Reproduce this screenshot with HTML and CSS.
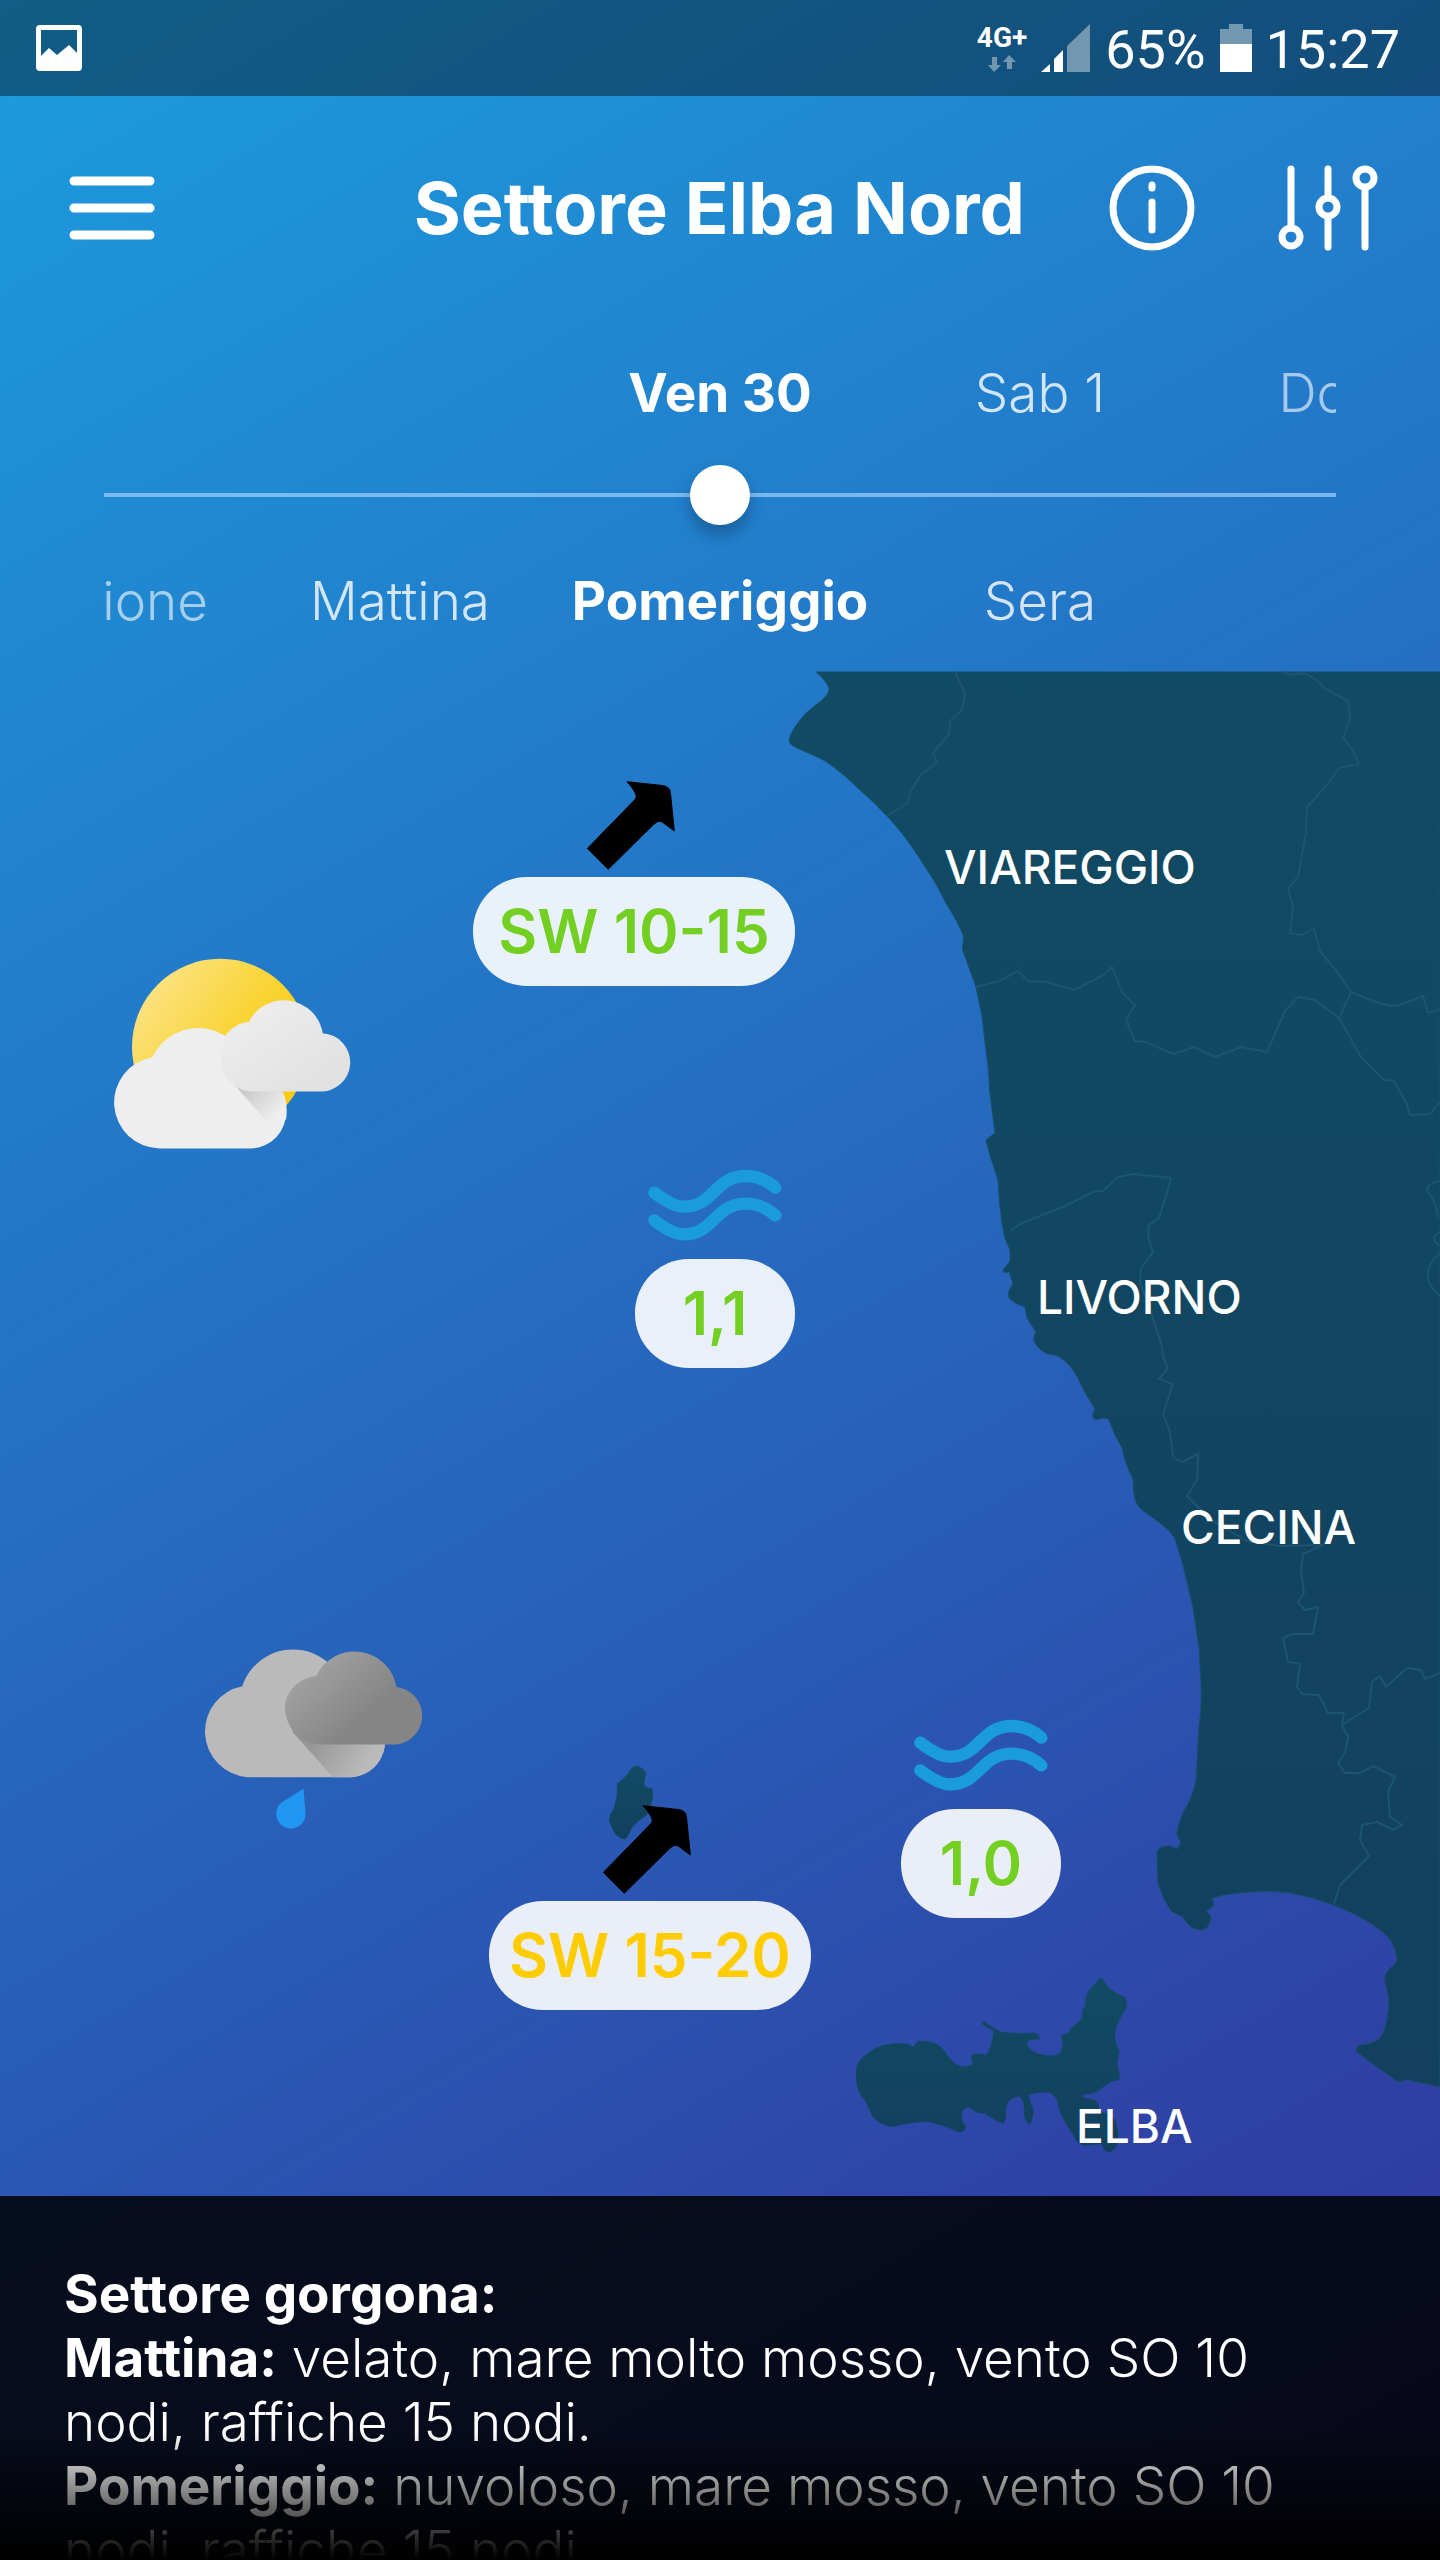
FILE: index.html
```html
<!DOCTYPE html>
<html lang="it">
<head>
    <meta charset="utf-8">
    <title>Settore Elba Nord</title>
    <link rel="stylesheet" href="styles.css">
</head>
<body>
<!-- barra di stato -->
<div class="status-bar">
    <svg class="status-picture" viewBox="0 0 48 48"><path fill="#fff" fill-rule="evenodd" d="M5 1h38a4 4 0 0 1 4 4v38a4 4 0 0 1-4 4H5a4 4 0 0 1-4-4V5a4 4 0 0 1 4-4zM6 6v26l8-8 8 7 12-10 8 8V6z"/></svg>
    <div class="status-right">
        <div class="network">
            <span>4G+</span>
            <svg viewBox="0 0 28 18"><path fill="#7497b0" d="M4 3h5v8h4l-7 7-6-7h4zM19 15h5V8h4l-7-7-6 7h4z"/></svg>
        </div>
        <svg class="signal" viewBox="0 0 50 48"><path fill="#fff" d="M0 48l9-8v8zM13 48V35l9-9v22z"/><path fill="#7497b0" d="M26 48V22L49 0v48z"/></svg>
        <span class="status-text">65%</span>
        <svg class="battery" viewBox="0 0 32 48"><path fill="#7497b0" d="M9 0h14v5h9v15H0V5h9z"/><path fill="#fff" d="M0 20h32v28H0z"/></svg>
        <span class="status-text">15:27</span>
    </div>
</div>

<header class="header">
    <button class="icon-button" type="button" aria-label="Menu">
        <svg class="icon-menu" viewBox="0 0 86 64"><path d="M5 5h76M5 32h76M5 59h76"/></svg>
    </button>
    <h1>Settore Elba Nord</h1>
    <button class="icon-button" type="button" aria-label="Info">
        <svg class="icon-info" viewBox="0 0 86 86"><circle cx="43" cy="43" r="39"/><path d="M43 37v28M43 20v3"/></svg>
    </button>
    <button class="icon-button" type="button" aria-label="Filtri">
        <svg class="icon-filter" viewBox="0 0 98 86"><path d="M12 4v59M49 4v29M49 52v30M86 23v59"/><circle cx="12" cy="72" r="9"/><circle cx="49" cy="42" r="9"/><circle cx="86" cy="13" r="9"/></svg>
    </button>
</header>

<!-- giorno e fascia oraria -->
<nav class="timeline">
    <div class="steps">
        <button class="step current first-day" type="button">Ven 30</button>
        <button class="step" type="button">Sab 1</button>
        <button class="step far" type="button">Dom 2</button>
    </div>
    <input class="slider" type="range" min="0" max="100" value="50" aria-label="Momento della previsione">
    <div class="steps">
        <button class="step far" type="button">Previsione</button>
        <button class="step" type="button">Mattina</button>
        <button class="step current" type="button">Pomeriggio</button>
        <button class="step" type="button">Sera</button>
    </div>
</nav>

<main class="map">
    <svg class="map-land" viewBox="0 672 1440 1524">
        <defs>
            <linearGradient id="land" x1="0" y1="0" x2="0" y2="1">
                <stop offset="0" stop-color="#114b63"/>
                <stop offset="1" stop-color="#12405e"/>
            </linearGradient>
        </defs>
        <!-- costa -->
        <path class="land" d="M816 672Q826 680 829 688Q830 693 821 701Q806 712 801 719Q791 731 789 740Q789 744 795 747C805 752 817 756 827 762Q844 774 860 790Q874 802 887 816Q905 835 920 859Q935 880 946 903Q959 924 963 935C965 942 961 945 963 951L976 987Q983 1015 985 1042Q989 1068 990 1094L995 1133L986 1140Q988 1150 998 1180Q999 1203 1002 1224Q1004 1239 1010 1250V1261L1003 1270Q1005 1275 1009 1271L1013 1284Q1007 1291 1009 1298C1014 1303 1022 1306 1025 1307L1027 1318L1036 1332Q1032 1338 1035 1343Q1040 1351 1048 1354C1056 1354 1063 1358 1070 1366Q1078 1376 1083 1389L1095 1409Q1090 1418 1096 1420Q1106 1416 1109 1420Q1114 1435 1122 1448Q1124 1461 1133 1479Q1133 1497 1137 1504C1141 1511 1149 1514 1157 1521Q1170 1530 1175 1539Q1183 1562 1188 1586Q1194 1608 1196 1629Q1200 1648 1200 1668Q1203 1698 1199 1727L1196 1780Q1193 1796 1183 1813Q1176 1830 1177 1835Q1179 1840 1181 1842L1177 1849Q1171 1845 1165 1846Q1157 1848 1157 1853Q1157 1870 1158 1883Q1163 1900 1172 1912L1183 1917Q1188 1926 1193 1928Q1201 1932 1207 1928L1211 1920Q1211 1913 1206 1912L1214 1905L1212 1898Q1226 1894 1240 1893Q1270 1890 1290 1893Q1313 1897 1333 1905Q1357 1914 1373 1925Q1387 1934 1392 1943Q1397 1953 1397 1960Q1394 1966 1390 1968Q1381 1977 1387 1990Q1390 1998 1388 2012Q1386 2030 1380 2038Q1374 2044 1360 2045Q1353 2049 1358 2053L1370 2062L1398 2082L1408 2080L1440 2087V672Z"/>
        <!-- confini delle province -->
        <g class="borders">
            <path d="M955 672L965 693 962 710 950 721 949 734 933 753 937 762 921 775 910 792 908 803 887 816"/>
            <path d="M1283 672L1291 675 1304 673 1317 680 1324 688 1348 701 1350 719 1343 738 1353 751 1359 764 1339 768 1326 786 1307 807 1306 833 1298 877 1288 888 1293 907 1290 933 1302 935 1314 928 1320 951 1341 977 1351 992 1339 1018"/>
            <path d="M976 987L999 981 1018 971 1028 981 1046 982 1074 990 1092 981 1105 974 1112 967 1122 992 1135 1005 1126 1020 1135 1041 1146 1042 1173 1054 1194 1047 1215 1057 1241 1047 1267 1052 1285 1011 1298 997 1315 1000 1339 1018 1361 1057 1384 1080 1394 1081 1406 1102 1410 1115 1430 1114 1440 1102"/>
            <path d="M1351 992Q1385 1007 1397 1006L1423 996 1428 1013 1440 1009"/>
            <path d="M1010 1231L1022 1223 1063 1207 1093 1192 1103 1191 1118 1177 1133 1174 1171 1178 1166 1196 1159 1218 1149 1225 1148 1237 1153 1252 1141 1268 1140 1282 1152 1316 1162 1346 1163 1357 1168 1368 1159 1379 1173 1384 1163 1414 1170 1432 1173 1457 1182 1462 1198 1454 1197 1480 1187 1496 1198 1507 1213 1521 1247 1541 1280 1546 1323 1545 1303 1554 1301 1571 1304 1593 1298 1602 1305 1610 1318 1607 1313 1634 1293 1634 1283 1638 1288 1662 1300 1664 1297 1687 1302 1694 1319 1695 1328 1713 1344 1713 1342 1725 1348 1737 1345 1753 1338 1763 1345 1773 1360 1773 1373 1766 1395 1777 1388 1792 1390 1817 1402 1825 1393 1830 1377 1822 1362 1825 1360 1840 1369 1856 1358 1867 1340 1885 1334 1904"/>
            <path d="M1342 1725L1369 1708 1372 1682 1380 1676 1386 1687 1407 1668 1421 1670 1425 1679 1440 1673"/>
            <path d="M1440 1181Q1422 1185 1429 1194Q1436 1200 1438 1218M1440 1232Q1428 1238 1440 1246M1440 1253Q1415 1275 1440 1296"/>
        </g>
        <!-- Capraia -->
        <path class="land" transform="translate(460 1740) scale(.3333)" d="M530 77Q548 82 558 98L552 132Q558 146 577 145Q582 170 574 190Q572 215 560 225Q530 245 515 265Q505 290 495 298Q480 298 466 282Q452 262 447 240Q450 220 460 208Q472 180 472 130Q498 113 512 88Q520 78 530 77Z"/>
        <!-- Elba -->
        <path class="land" transform="translate(820 1700) scale(.3333)" d="M108 1130Q106 1100 118 1082Q150 1048 190 1035Q230 1026 265 1032L280 1041L292 1024Q320 1020 345 1030Q370 1042 385 1070Q405 1098 430 1100Q455 1100 458 1090Q448 1068 462 1062Q480 1060 498 1065Q518 1040 520 992L488 974Q484 962 492 964Q525 990 550 997Q600 1002 645 998Q662 1005 658 1020Q640 1015 622 1025Q618 1045 650 1060Q700 1075 720 1058Q735 1035 722 1005L745 1000L755 982Q768 975 785 955L788 930L797 915Q792 890 810 868Q830 845 843 831L865 862Q885 880 915 892Q925 910 916 930Q880 985 886 1020L898 1055L892 1090L901 1135Q895 1145 880 1143Q855 1155 840 1170Q825 1182 788 1184Q785 1192 800 1195Q830 1195 835 1215L840 1235Q885 1240 890 1275Q900 1310 890 1340Q875 1365 853 1352L845 1332Q810 1335 790 1337Q768 1330 763 1310Q715 1240 713 1205Q705 1185 690 1178Q650 1175 625 1186L640 1230Q640 1265 628 1272Q612 1262 612 1240Q615 1200 598 1190Q565 1190 558 1225Q560 1260 550 1271Q520 1262 495 1240L475 1240L445 1222Q425 1225 424 1250Q428 1270 438 1278Q435 1302 410 1295Q370 1275 320 1265Q250 1270 220 1281Q175 1275 155 1245Q140 1205 122 1185Q108 1160 108 1130Z"/>
        <g class="places">
            <text x="944" y="884">VIAREGGIO</text>
            <text x="1037" y="1314">LIVORNO</text>
            <text x="1181" y="1544">CECINA</text>
            <text x="1076" y="2143">ELBA</text>
        </g>
    </svg>

    <svg class="weather sun-cloud" viewBox="95 112 715 580" role="img" aria-label="Velato">
        <defs>
            <linearGradient id="sun" x1="0" y1="0.2" x2="0.8" y2="0.8"><stop offset="0" stop-color="#fde389"/><stop offset=".6" stop-color="#f9d433"/><stop offset="1" stop-color="#fbcb12"/></linearGradient>
            <linearGradient id="white-cloud" x1="0" y1="0" x2="1" y2="1"><stop offset=".1" stop-color="#eee"/><stop offset=".8" stop-color="#e2e2e2"/></linearGradient>
            <linearGradient id="light-shade" gradientUnits="userSpaceOnUse" x1="490" y1="500" x2="585" y2="590"><stop offset="0" stop-color="#c6c6c6"/><stop offset="1" stop-color="#eee"/></linearGradient>
        </defs>
        <circle cx="420" cy="382" r="265" fill="url(#sun)"/>
        <path fill="#eee" d="M237 687A138 138 0 0 1 216 413A153 153 0 0 1 507 471A108 108 0 0 1 513 687Z"/>
        <path fill="url(#light-shade)" d="M440 470L555 600H618Q625 550 605 510Z"/>
        <path fill="url(#white-cloud)" d="M510 516Q465 512 436 470Q405 410 440 342Q470 308 506 307A118 118 0 0 1 728 341A87 87 0 0 1 718 516Z"/>
    </svg>

    <svg class="weather rain-cloud" viewBox="58 92 676 536" role="img" aria-label="Pioggia debole">
        <defs>
            <linearGradient id="gray-cloud" x1="0" y1="0.2" x2="0.7" y2="0.7"><stop offset="0" stop-color="#a6a6a6"/><stop offset=".9" stop-color="#858585"/></linearGradient>
            <linearGradient id="dark-shade" gradientUnits="userSpaceOnUse" x1="390" y1="370" x2="540" y2="460"><stop offset="0" stop-color="#969696"/><stop offset="1" stop-color="#bababa"/></linearGradient>
        </defs>
        <path fill="#bababa" d="M199 471A138 138 0 0 1 185 198A160 160 0 0 1 497 255A108 108 0 0 1 515 471Z"/>
        <path fill="url(#dark-shade)" d="M335 335L458 471H515Q600 460 614 372Z"/>
        <path fill="url(#gray-cloud)" d="M415 373Q370 372 338 335Q290 260 335 205Q365 170 408 166A127 127 0 0 1 648 200A87 87 0 0 1 648 373Z"/>
        <path fill="#2196f3" d="M369 506L375 578A44 44 0 1 1 305 546Z"/>
    </svg>

    <div class="pin wind wind-north">
        <svg class="arrow" viewBox="428 194 266 268"><path d="M429 398L575 248Q584 235 549 196L660 208Q678 212 680 228L692 345L654 317Q642 312 630 325L492 461Z"/></svg>
        <span class="pill calm">SW 10-15</span>
    </div>
    <div class="pin sea sea-north">
        <svg class="waves" viewBox="281 56 402 215"><path d="M300 127C340 158 365 169 388 169C480 169 480 77 575 77C610 77 640 92 663 112M300 210C340 241 365 252 388 252C480 252 480 160 575 160C610 160 640 175 663 195"/></svg>
        <span class="pill calm">1,1</span>
    </div>
    <div class="pin wind wind-south">
        <svg class="arrow" viewBox="428 194 266 268"><path d="M429 398L575 248Q584 235 549 196L660 208Q678 212 680 228L692 345L654 317Q642 312 630 325L492 461Z"/></svg>
        <span class="pill fresh">SW 15-20</span>
    </div>
    <div class="pin sea sea-south">
        <svg class="waves" viewBox="281 56 402 215"><path d="M300 127C340 158 365 169 388 169C480 169 480 77 575 77C610 77 640 92 663 112M300 210C340 241 365 252 388 252C480 252 480 160 575 160C610 160 640 175 663 195"/></svg>
        <span class="pill calm">1,0</span>
    </div>
</main>

<section class="forecast">
    <h2>Settore gorgona:</h2>
    <p><b>Mattina:</b> velato, mare molto mosso, vento SO 10 nodi, raffiche 15 nodi.</p>
    <p><b>Pomeriggio:</b> nuvoloso, mare mosso, vento SO 10 nodi, raffiche 15 nodi.</p>
</section>
</body>
</html>
```
FILE: styles.css
```css
* {
    box-sizing: border-box;
}
body {
    margin: 0;
    height: 100vh;
    display: flex;
    flex-direction: column;
    overflow: hidden;
    color: #fff;
    font-family: Inter, "Liberation Sans", sans-serif;
    background: linear-gradient(150deg, #1c9cde 0%, #2669bf 50%, #2f3fa3 86%, #303aa0 100%);
}
svg {
    display: block;
    flex: none;
    overflow: visible;
}
button {
    padding: 0;
    border: none;
    background: none;
    color: inherit;
    font-family: inherit;
    cursor: pointer;
}

/* barra di stato */
.status-bar {
    flex: none;
    height: 96px;
    padding: 0 40px 0 35px;
    display: flex;
    align-items: center;
    justify-content: space-between;
    background: rgba(0, 0, 0, 0.4);
    font-family: Roboto, sans-serif;
}
.status-picture {
    width: 48px;
}
.status-right {
    display: flex;
    align-items: center;
    gap: 14px;
}
.network {
    display: flex;
    flex-direction: column;
    align-items: center;
    gap: 2px;
    font-size: 28px;
    line-height: 28px;
    font-weight: 700;
}
.network svg {
    width: 28px;
}
.signal {
    width: 50px;
}
.battery {
    width: 32px;
}
.status-text {
    padding-top: 4px;
    font-size: 54px;
    line-height: 60px;
}

/* intestazione */
.header {
    flex: none;
    height: 224px;
    padding: 0 63px 0 69px;
    display: flex;
    align-items: center;
}
.header h1 {
    margin: 0;
    flex: 1;
    text-align: right;
    padding-right: 84px;
    font-size: 72px;
    line-height: 80px;
    font-weight: 700;
}
.icon-button + .icon-button {
    margin-left: 84px;
}
.icon-button svg {
    fill: none;
    stroke: #fff;
    stroke-width: 7;
    stroke-linecap: round;
}
.icon-button .icon-menu {
    width: 86px;
    stroke-width: 9;
}
.icon-info {
    width: 86px;
}
.icon-filter {
    width: 98px;
}

/* selettore del momento */
.timeline {
    flex: none;
    height: 352px;
    padding: 41px 104px 0;
}
.steps {
    display: grid;
    grid-template-columns: repeat(5, 320px);
    justify-content: center;
    overflow: hidden;
}
.step {
    height: 64px;
    font-size: 53px;
    line-height: 64px;
    font-weight: 300;
    opacity: 0.8;
}
.step.current {
    font-weight: 700;
    opacity: 1;
}
.step.far {
    opacity: 0.6;
}
.first-day {
    grid-column: 3;
}
.slider {
    display: block;
    appearance: none;
    width: 100%;
    height: 60px;
    margin: 40px 0 44px;
    background: linear-gradient(rgba(160, 208, 255, 0.7), rgba(160, 208, 255, 0.7)) center / 100% 4px no-repeat;
}
.slider::-webkit-slider-thumb {
    appearance: none;
    width: 60px;
    height: 60px;
    border-radius: 50%;
    background: #fff;
    box-shadow: 0 10px 16px rgba(0, 0, 0, 0.25);
}

/* mappa */
.map {
    position: relative;
    flex: none;
    aspect-ratio: 1440 / 1524;
}
.map-land {
    width: 100%;
    height: 100%;
}
.land {
    fill: url(#land);
    stroke: #17506a;
    stroke-width: 1;
    stroke-linejoin: round;
}
.borders {
    fill: none;
    stroke: #1d5470;
    stroke-width: 2;
    stroke-linejoin: round;
}
.places {
    fill: #fff;
    font-size: 46px;
    font-weight: 500;
}
.weather {
    position: absolute;
}
.sun-cloud {
    left: 112px;
    top: 285px;
    width: 238px;
}
.rain-cloud {
    left: 200px;
    top: 979px;
    width: 225px;
}
.pin {
    position: absolute;
    display: flex;
    flex-direction: column;
    align-items: center;
}
.wind {
    width: 322px;
    gap: 7px;
}
.sea {
    width: 160px;
    gap: 18px;
}
.wind-north {
    left: 473px;
    top: 109px;
}
.wind-south {
    left: 489px;
    top: 1133px;
}
.sea-north {
    left: 635px;
    top: 497px;
}
.sea-south {
    left: 901px;
    top: 1047px;
}
.arrow {
    width: 88px;
    margin-right: 6px;
}
.arrow path {
    stroke: #000;
    stroke-width: 3;
    stroke-linejoin: round;
}
.waves {
    width: 134px;
    fill: none;
    stroke: #1a9bdc;
    stroke-width: 37;
    stroke-linecap: round;
}
.pill {
    width: 100%;
    height: 109px;
    border-radius: 54px;
    background: rgba(255, 255, 255, 0.9);
    font-size: 60px;
    line-height: 109px;
    font-weight: 600;
    text-align: center;
    white-space: nowrap;
}
.calm {
    color: #73cf22;
}
.fresh {
    color: #fc0;
}

/* bollettino */
.forecast {
    position: relative;
    flex: 1;
    min-height: 0;
    overflow: hidden;
    padding: 66px 112px 0 64px;
    background: rgba(0, 0, 0, 0.84);
    font-size: 53px;
    line-height: 64px;
    font-weight: 300;
}
.forecast::after {
    content: "";
    position: absolute;
    left: 0;
    right: 0;
    bottom: 0;
    height: 130px;
    background: linear-gradient(transparent, #000);
}
.forecast h2 {
    margin: 0;
    font-size: 53px;
    line-height: 64px;
    font-weight: 700;
}
.forecast p {
    margin: 0;
}
.forecast b {
    font-weight: 700;
}
```
